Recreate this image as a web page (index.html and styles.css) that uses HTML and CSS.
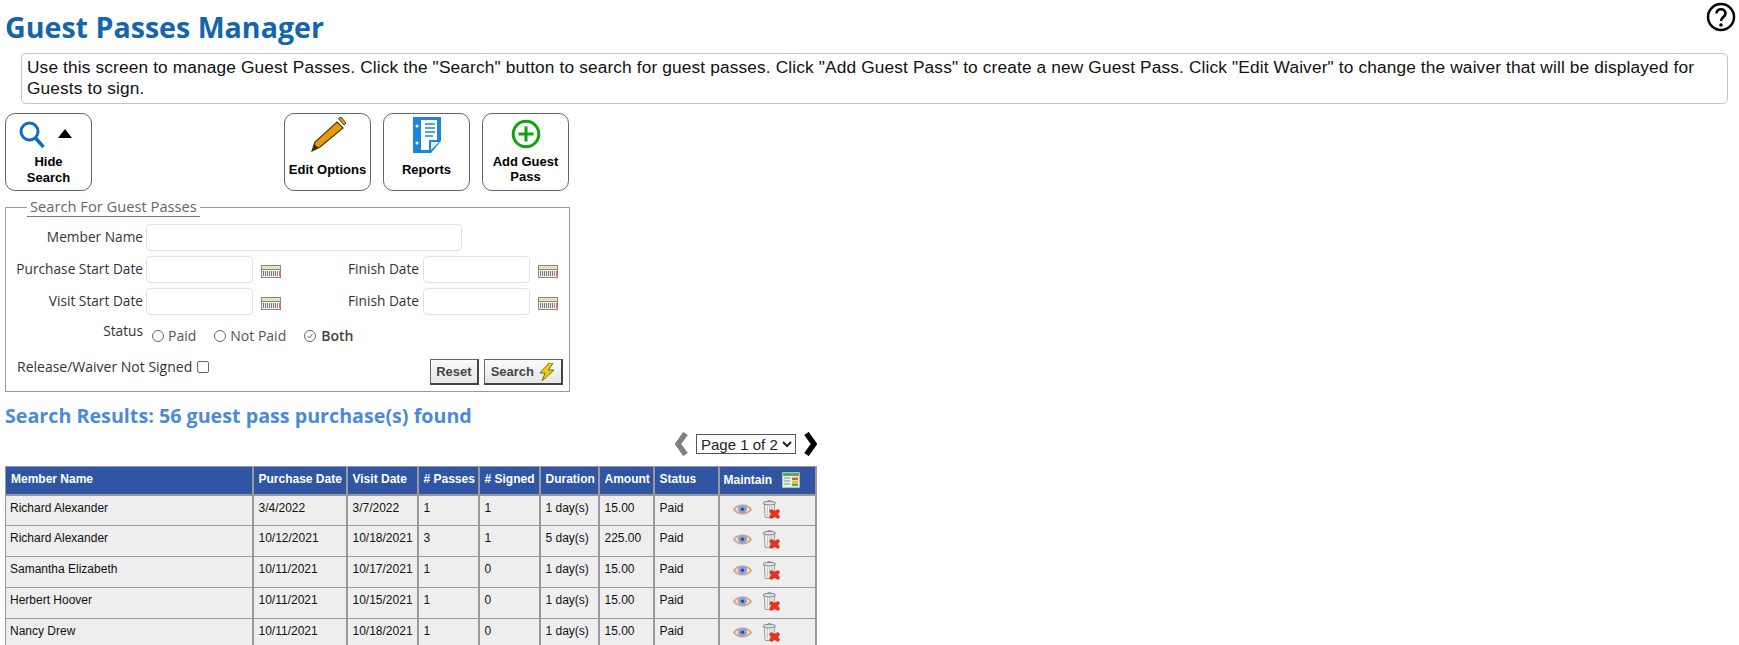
FILE: index.html
```html
<!DOCTYPE html>
<html lang="en">
<head>
<meta charset="utf-8">
<title>Guest Passes Manager</title>
<link rel="stylesheet" href="styles.css">
</head>
<body>
<svg class="sprite" width="0" height="0" aria-hidden="true">
  <defs>
    <symbol id="cal" viewBox="0 0 20 13">
      <rect x="0" y="0" width="20" height="13" fill="#8a8a80"/>
      <rect x="1" y="1" width="18" height="3" fill="#e6e2b8"/>
      <rect x="1" y="5" width="18" height="7" fill="#f2f0ea"/>
      <path d="M2 6h1v5H2zM4 6h1v5H4zM6 6h1v5H6zM8 6h1v5H8zM10 6h1v5h-1zM12 6h1v5h-1zM14 6h1v5h-1z" fill="#77777c"/>
      <path d="M16 6h1v5h-1zM18 6h1v5h-1z" fill="#d8726e"/>
    </symbol>
    <symbol id="eye" viewBox="0 0 20 14">
      <path d="M1 7.500C5 1.800 15 1.800 19 7.500C15 13.200 5 13.200 1 7.500Z" fill="#f5e3d2" stroke="#d9a57e" stroke-width="1.800"/>
      <ellipse cx="10" cy="7.200" rx="4.800" ry="4.400" fill="#8aa4dc"/>
      <circle cx="10" cy="7.200" r="1.800" fill="#2c4a9a"/>
    </symbol>
    <symbol id="trash" viewBox="0 0 20 22">
      <path d="M2.500 5.500L3.500 20.500H13L14 5.500Z" fill="#f1f2f3" stroke="#8b8f93"/>
      <path d="M6 7.500V18.500M8.500 7.500V18.500M11 7.500V18.500" stroke="#b8bcc0"/>
      <ellipse cx="8.200" cy="4.500" rx="7" ry="2" fill="#dfe1e3" stroke="#777b80"/>
      <path d="M6 2.500Q8 .5 10.500 2.500" fill="none" stroke="#777b80"/>
      <path d="M10 11L14 13L18 11L20 13.500L18 16.500L20 19.500L18 22L14 20L10 22L8 19.500L10 16.500L8 13.500Z" fill="#e2341f"/>
    </symbol>
  </defs>
</svg>

<header class="top">
  <h1 class="title">Guest Passes Manager</h1>
  <svg class="help" viewBox="0 0 30 30" aria-label="Help">
    <circle cx="15" cy="15" r="13" fill="none" stroke="#000" stroke-width="2.500"/>
    <path d="M10.500 11.500C10.500 5.800 19.500 5.800 19.500 11.500C19.500 15 15 15 15 19" fill="none" stroke="#000" stroke-width="2.600"/>
    <circle cx="15" cy="23" r="1.800" fill="#000"/>
  </svg>
</header>

<p class="intro">Use this screen to manage Guest Passes. Click the "Search" button to search for guest passes. Click "Add Guest Pass" to create a new Guest Pass. Click "Edit Waiver" to change the waiver that will be displayed for Guests to sign.</p>

<div class="toolbar">
  <button class="tool tool-hide" type="button">
    <span class="tool-icons">
      <svg class="ic-search" viewBox="0 0 26 28"><circle cx="10.500" cy="10.500" r="8.500" fill="none" stroke="#0f6cc4" stroke-width="3"/><path d="M16.500 17L24.500 26" stroke="#0f6cc4" stroke-width="3.400"/></svg>
      <svg class="ic-tri" viewBox="0 0 14 9"><path d="M7 0L14 9H0Z" fill="#000"/></svg>
    </span>
    <span class="tool-label">Hide<br>Search</span>
  </button>
  <button class="tool" type="button">
    <svg class="ic-tool" viewBox="0 0 36 36"><path d="M27 5L33 11L10 30L2 34L5 25Z" fill="#e89c0c" stroke="#4a3a10" stroke-width="1.200"/><path d="M2 34L4.500 27L8.500 31Z" fill="#3c3010"/><path d="M28.500 1.500L31 0L36 6L34 8Z" fill="#e89c0c" stroke="#4a3a10"/></svg>
    <span class="tool-label">Edit Options</span>
  </button>
  <button class="tool" type="button">
    <svg class="ic-tool" viewBox="0 0 36 36"><path d="M4 0H32V24L22 36H4Z" fill="#1a86dc"/><path d="M12 3H28V23H20V33H12Z" fill="#fff"/><path d="M22 33V25H30Z" fill="#e3f0fa"/><path d="M16 7H26M16 11H26M16 15H26M16 19H24" stroke="#1a86dc" stroke-width="1.400"/><circle cx="8" cy="9" r="1.500" fill="#fff"/><circle cx="8" cy="26" r="1.500" fill="#fff"/></svg>
    <span class="tool-label">Reports</span>
  </button>
  <button class="tool tool-add" type="button">
    <svg class="ic-tool" viewBox="0 0 36 36"><circle cx="18" cy="18" r="12.800" fill="none" stroke="#0fa30f" stroke-width="3"/><path d="M18 10.500V25.500M10.500 18H25.500" stroke="#0fa30f" stroke-width="3"/></svg>
    <span class="tool-label">Add Guest<br>Pass</span>
  </button>
</div>

<form class="search-form">
  <fieldset class="search">
    <legend class="search-legend">Search For Guest Passes</legend>
    <div class="row">
      <label class="lbl lbl-a">Member Name</label>
      <input class="field field-wide" type="text">
    </div>
    <div class="row">
      <label class="lbl lbl-a">Purchase Start Date</label>
      <input class="field" type="text">
      <svg class="cal"><use href="#cal"/></svg>
      <label class="lbl lbl-b">Finish Date</label>
      <input class="field" type="text">
      <svg class="cal"><use href="#cal"/></svg>
    </div>
    <div class="row">
      <label class="lbl lbl-a">Visit Start Date</label>
      <input class="field" type="text">
      <svg class="cal"><use href="#cal"/></svg>
      <label class="lbl lbl-b">Finish Date</label>
      <input class="field" type="text">
      <svg class="cal"><use href="#cal"/></svg>
    </div>
    <div class="row row-status">
      <span class="lbl lbl-a lbl-status">Status</span>
      <label class="opt"><span class="radio"></span>Paid</label>
      <label class="opt"><span class="radio"></span>Not Paid</label>
      <label class="opt opt-on"><svg class="radio-on" viewBox="0 0 14 14"><circle cx="7" cy="7" r="5.500" fill="none" stroke="#666"/><path d="M4.500 7L6.500 9L9.500 5" fill="none" stroke="#666"/></svg>Both</label>
    </div>
    <div class="row-last">
      <label class="waiver">Release/Waiver Not Signed <span class="check"></span></label>
      <div class="actions">
        <button class="btn btn-reset" type="button">Reset</button>
        <button class="btn" type="button">Search
          <svg class="bolt" viewBox="0 0 16 18"><path d="M10 0L1 10H6L3 18L15 7H9.500L14 0Z" fill="#f0c818" stroke="#7c6c10"/></svg>
        </button>
      </div>
    </div>
  </fieldset>
</form>

<h2 class="results">Search Results: 56 guest pass purchase(s) found</h2>

<div class="pager">
  <svg class="arrow" viewBox="0 0 13 24"><path d="M10.500 1.500L3 12L10.500 22.500" fill="none" stroke="#808080" stroke-width="5.500"/></svg>
  <select class="page-select"><option>Page 1 of 2</option><option>Page 2 of 2</option></select>
  <svg class="arrow" viewBox="0 0 13 24"><path d="M2.500 1.500L10 12L2.500 22.500" fill="none" stroke="#000" stroke-width="5.500"/></svg>
</div>

<table class="grid">
  <colgroup>
    <col class="c1"><col class="c2"><col class="c3"><col class="c4"><col class="c5"><col class="c6"><col class="c7"><col class="c8"><col class="c9">
  </colgroup>
  <thead>
    <tr>
      <th>Member Name</th><th>Purchase Date</th><th>Visit Date</th><th># Passes</th><th># Signed</th><th>Duration</th><th>Amount</th><th>Status</th>
      <th class="th-maintain">Maintain<svg class="ic-list" viewBox="0 0 18 16"><rect x="0" y="0" width="18" height="16" fill="#e8f2e4" stroke="#6f9a70"/><rect x="1" y="1" width="16" height="3" fill="#5fa55f"/><path d="M2 6h6M2 9h6M2 12h6" stroke="#7f8f9f"/><rect x="10" y="5.500" width="6" height="2.500" fill="#e05a3a"/><rect x="10" y="8.500" width="6" height="2.500" fill="#e8c030"/><rect x="10" y="11.500" width="6" height="2.500" fill="#59a84e"/></svg></th>
    </tr>
  </thead>
  <tbody>
    <tr><td>Richard Alexander</td><td>3/4/2022</td><td>3/7/2022</td><td>1</td><td>1</td><td>1 day(s)</td><td>15.00</td><td>Paid</td><td class="acts"><svg class="eye"><use href="#eye"/></svg><svg class="trash"><use href="#trash"/></svg></td></tr>
    <tr><td>Richard Alexander</td><td>10/12/2021</td><td>10/18/2021</td><td>3</td><td>1</td><td>5 day(s)</td><td>225.00</td><td>Paid</td><td class="acts"><svg class="eye"><use href="#eye"/></svg><svg class="trash"><use href="#trash"/></svg></td></tr>
    <tr><td>Samantha Elizabeth</td><td>10/11/2021</td><td>10/17/2021</td><td>1</td><td>0</td><td>1 day(s)</td><td>15.00</td><td>Paid</td><td class="acts"><svg class="eye"><use href="#eye"/></svg><svg class="trash"><use href="#trash"/></svg></td></tr>
    <tr><td>Herbert Hoover</td><td>10/11/2021</td><td>10/15/2021</td><td>1</td><td>0</td><td>1 day(s)</td><td>15.00</td><td>Paid</td><td class="acts"><svg class="eye"><use href="#eye"/></svg><svg class="trash"><use href="#trash"/></svg></td></tr>
    <tr><td>Nancy Drew</td><td>10/11/2021</td><td>10/18/2021</td><td>1</td><td>0</td><td>1 day(s)</td><td>15.00</td><td>Paid</td><td class="acts"><svg class="eye"><use href="#eye"/></svg><svg class="trash"><use href="#trash"/></svg></td></tr>
  </tbody>
</table>
</body>
</html>
```
FILE: styles.css
```css
* { box-sizing: border-box; }
html, body { height: 645px; overflow: hidden; }
body { margin: 0; background: #fff; color: #000; font-family: "Liberation Sans", Arial, sans-serif; }
.sprite { position: absolute; }

.top { display: flex; justify-content: space-between; align-items: flex-start; height: 53px; padding: 2px 3px 0 5px; }
.title { margin: 5px 0 0; font: 700 28.600px/40px "Open Sans", sans-serif; color: #1565ab; }
.help { width: 30px; height: 30px; }

.intro { margin: 0 11px 0 21px; padding: 3px 5px 4px 5px; height: 51px; border: 1px solid #c4c4c4; border-radius: 5px; font-size: 17.300px; letter-spacing: .14px; line-height: 21px; color: #111; }

.toolbar { display: flex; gap: 12px; margin: 9px 0 0 5px; width: 566px; }
.tool { width: 87px; height: 78px; padding: 0; display: flex; flex-direction: column; align-items: center; background: #fff; border: 1px solid #666; border-radius: 10px; font: 700 13px/15.500px "Liberation Sans", Arial, sans-serif; color: #000; }
.tool-hide { margin-right: 180px; }
.ic-tool { width: 36px; height: 36px; margin-top: 3px; flex: none; }
.tool-add .ic-tool { margin-top: 2px; }
.tool-icons { display: flex; align-items: center; gap: 13px; height: 36px; margin-top: 3px; margin-right: 6px; }
.ic-search { width: 26px; height: 28px; }
.ic-tri { width: 14px; height: 9px; margin-top: -3px; }
.tool-label { flex: 1; display: flex; align-items: center; justify-content: center; text-align: center; margin-bottom: 4px; }

.search-form { margin: 6px 0 0 5px; width: 565px; }
.search { margin: 0; padding: 7px 9px 0 6px; height: 195px; border: 1px solid #999; }
.search-legend { margin-left: 15px; padding: 0 3px 0 3px; font: 400 14.700px/19px "Open Sans", sans-serif; color: #666; border-bottom: 1px solid #777; }

.row { display: flex; align-items: center; height: 27px; margin-bottom: 5px; }
.lbl { font: 400 13.700px/18px "Open Sans", sans-serif; color: #333; text-align: right; white-space: nowrap; margin-top: -2px; }
.lbl-a { width: 131px; margin-right: 3px; flex: none; }
.lbl-b { width: 134px; margin-right: 4px; margin-left: 4px; flex: none; }
.field { width: 107px; height: 27px; border: 1px solid #e2e2e2; border-radius: 4px; background: #fff; padding: 0 4px; }
.field-wide { width: 316px; }
.cal { width: 20px; height: 13px; margin-left: 8px; margin-top: 3px; flex: none; }

.row-status { height: 24px; margin: 9px 0 0; }
.lbl-status { position: relative; top: -4px; }
.opt { display: inline-flex; align-items: center; gap: 4px; margin-left: 6px; margin-right: 12px; font: 400 14px/18px "Open Sans", sans-serif; color: #555; }
.opt-on { color: #444; font-weight: 600; margin-left: 5px; }
.radio { width: 12px; height: 12px; border: 1px solid #666; border-radius: 50%; background: #fff; }
.radio-on { width: 14px; height: 14px; }

.row-last { display: flex; justify-content: space-between; align-items: flex-start; margin-top: 11px; }
.waiver { display: inline-flex; align-items: center; gap: 5px; margin: -1px 0 0 5px; font: 400 14px/18px "Open Sans", sans-serif; color: #333; }
.check { width: 12px; height: 12px; border: 1px solid #666; border-radius: 2px; background: #fff; }
.actions { display: flex; gap: 5px; margin-right: -3px; }
.btn { height: 26px; padding: 0 6px; display: inline-flex; align-items: center; gap: 5px; background: linear-gradient(#fafafa, #e6e6e6); border-style: solid; border-color: #666 #444 #444 #666; border-width: 1px 2px 2px 1px; font: 700 13px "Liberation Sans", Arial, sans-serif; color: #444; }
.btn-reset { padding: 0 5px; }
.bolt { width: 16px; height: 18px; }

.results { margin: 11px 0 0 5px; font: 700 19.700px/26px "Open Sans", sans-serif; color: #4a8bd6; }

.pager { display: flex; justify-content: flex-end; align-items: center; gap: 8px; width: 817px; height: 24px; margin-top: 3px; }
.arrow { width: 13px; height: 24px; flex: none; }
.page-select { width: 100px; height: 20px; padding: 0; background: #fff; border: 1px solid #555; font: 15px "Liberation Sans", Arial, sans-serif; color: #222; }

.grid { table-layout: fixed; border-collapse: collapse; width: 810px; margin: 10px 0 0 5px; font-size: 12px; }
.c1 { width: 247px; } .c2 { width: 94px; } .c3 { width: 71px; } .c4 { width: 61px; } .c5 { width: 61px; }
.c6 { width: 59px; } .c7 { width: 55px; } .c8 { width: 65px; } .c9 { width: 97px; }
.grid th, .grid td { border: 1px solid #999; text-align: left; vertical-align: top; overflow: hidden; white-space: nowrap; }
.grid th { height: 28px; padding: 5px 5px 0; background: #2f55a4; color: #fff; font-weight: 700; border-width: 1px 2px 2px 1px; }
.grid th.th-maintain { padding-left: 4px; }
.grid td { height: 31px; padding: 5px 4px 0 5px; background: #eee; color: #111; border-width: 1px 2px 1px 1px; }
.grid td:first-child { padding-left: 4px; }
.ic-list { width: 18px; height: 16px; margin-left: 10px; vertical-align: -4px; }
.grid td.acts { padding: 3px 0 0 13px; }
.eye { width: 19px; height: 14px; margin-top: 3px; vertical-align: top; }
.trash { width: 18px; height: 20px; margin-left: 10px; vertical-align: top; }
```
